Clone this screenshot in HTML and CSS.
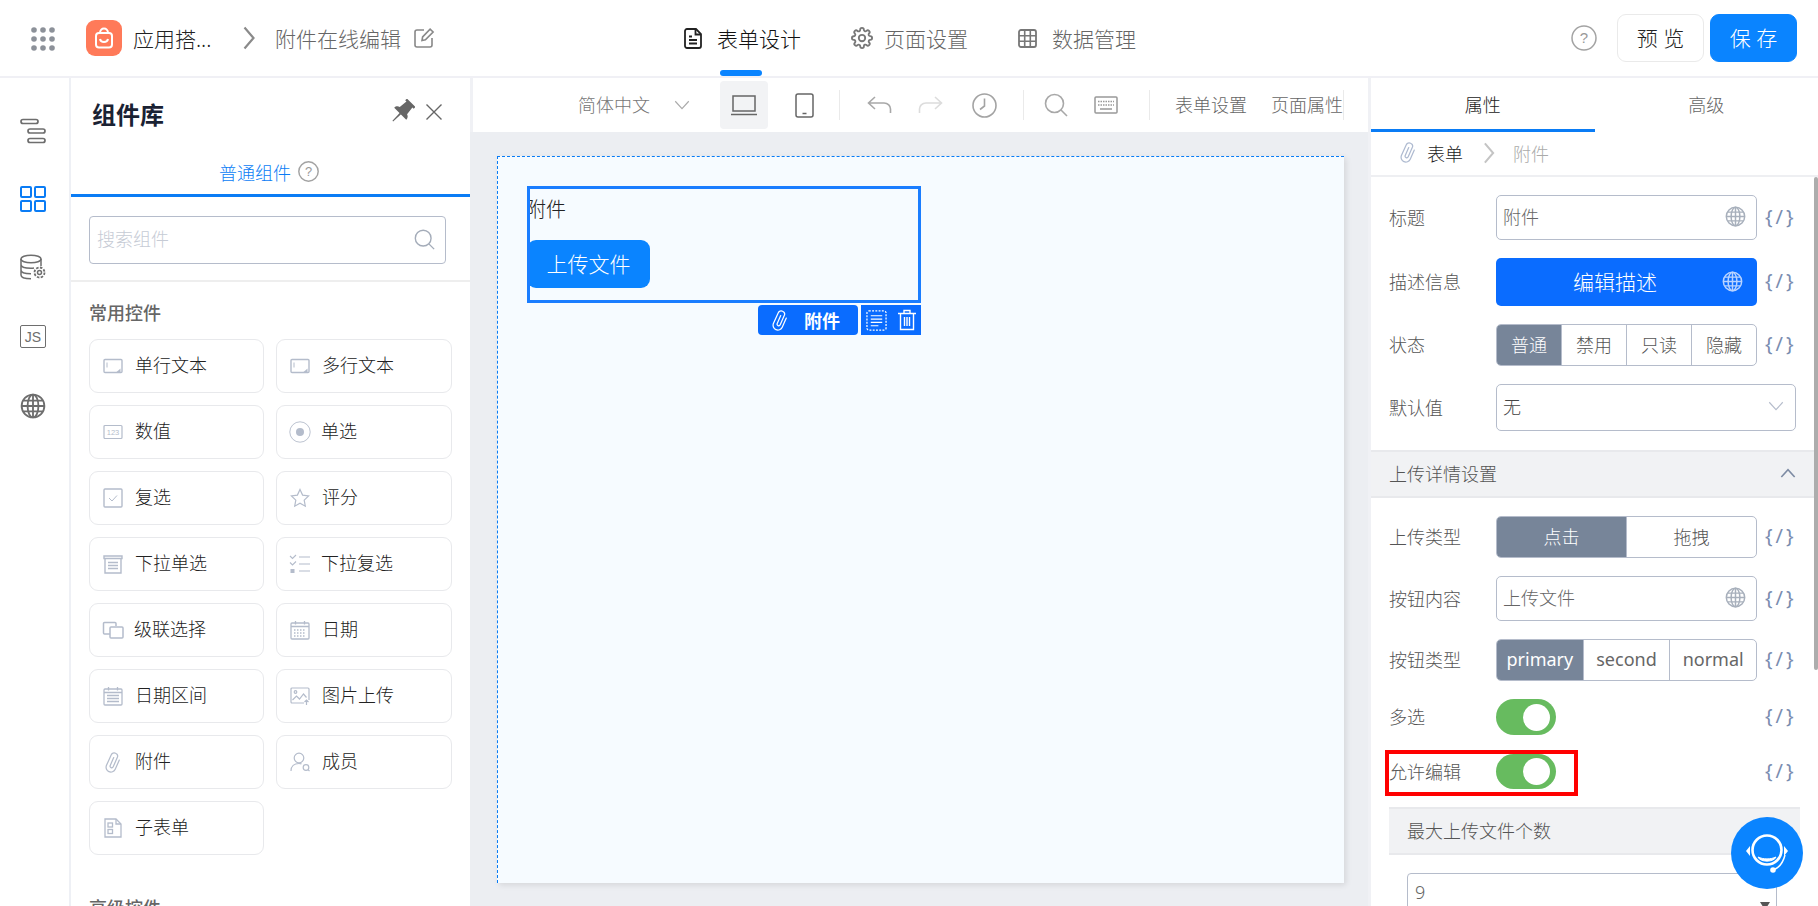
FILE: index.html
```html
<!DOCTYPE html>
<html lang="zh-CN">
<head>
<meta charset="utf-8">
<title>附件在线编辑</title>
<link rel="stylesheet" href="styles.css">
</head>
<body>
<svg class="defs" aria-hidden="true">
  <symbol id="clip" viewBox="3 1 18 22"><path transform="rotate(24 12 12)" d="M17 7V17.500a5 5 0 0 1-10 0V5.500a3.500 3.500 0 0 1 7 0V16a1.700 1.700 0 0 1-3.400 0V7" fill="none" stroke="currentColor" stroke-width="1.300" stroke-linecap="round" stroke-linejoin="round"/></symbol>
  <symbol id="globe" viewBox="0 0 24 24"><g fill="none" stroke="currentColor" stroke-width="1.700"><circle cx="12" cy="12" r="10.500"/><ellipse cx="12" cy="12" rx="5" ry="10.500"/><path d="M12 1.500v21M1.500 12h21M3 7h18M3 17h18"/></g></symbol>
  <symbol id="chev" viewBox="0 0 24 24"><path d="M3 7l9 10 9-10" fill="none" stroke="currentColor" stroke-width="1.500"/></symbol>
  <symbol id="right" viewBox="0 0 12 24"><path d="M1.500 1.500L10.500 12 1.500 22.500" fill="none" stroke="currentColor" stroke-width="2.200"/></symbol>
  <symbol id="search" viewBox="0 0 24 24"><circle cx="10.500" cy="10.500" r="9" fill="none" stroke="currentColor" stroke-width="1.600"/><path d="M17 17l6 6" stroke="currentColor" stroke-width="1.600"/></symbol>
  <symbol id="input" viewBox="0 0 20 16"><rect x="1" y="1.500" width="18" height="13" rx="1" fill="none" stroke="currentColor" stroke-width="1.400"/><path d="M4 4.500v5" stroke="currentColor"/><path d="M17.500 10.500l-4 3.500h4z" fill="currentColor"/></symbol>
  <symbol id="radio" viewBox="0 0 22 22"><circle cx="11" cy="11" r="10.200" fill="none" stroke="currentColor" stroke-width=".9"/><circle cx="11" cy="11" r="4" fill="currentColor"/></symbol>
  <symbol id="check" viewBox="0 0 20 20"><rect x="1" y="1" width="18" height="18" rx="1" fill="none" stroke="currentColor" stroke-width="1.400"/><path d="M6 10l3 3 5-5.500" fill="none" stroke="currentColor"/></symbol>
  <symbol id="star" viewBox="0 0 20 20"><path d="M10 1.500l2.600 5.600 6 .8-4.400 4.200 1.100 6.100L10 15.300l-5.300 2.900 1.100-6.100L1.400 7.900l6-.8z" fill="none" stroke="currentColor" stroke-width="1.200"/></symbol>
  <symbol id="sel" viewBox="0 0 20 20"><g fill="none" stroke="currentColor" stroke-width="1.400"><path d="M1 2h18v2.500H1z"/><path d="M2 5v14h16V5M5 8.500h10M5 11.500h10M5 14.500h10"/></g></symbol>
  <symbol id="multi" viewBox="0 0 22 20"><g fill="none" stroke="currentColor" stroke-width="1.100"><path d="M1 2l2.500 2.500L7 1M1 8.500l2.500 2.500L7 7.500M10 3h11M10 10h11M10 17h11"/></g><rect x="1.500" y="15" width="4" height="4" fill="currentColor"/></symbol>
  <symbol id="casc" viewBox="0 0 22 20"><g fill="none" stroke="currentColor" stroke-width="1.500"><path d="M8 14H2.500a1 1 0 0 1-1-1V3.500a1 1 0 0 1 1-1H13a1 1 0 0 1 1 1V6"/><rect x="8" y="7" width="13" height="11" rx="1"/></g></symbol>
  <symbol id="cal" viewBox="0 0 20 20"><g fill="none" stroke="currentColor" stroke-width="1.300"><rect x="1" y="3" width="18" height="16" rx="1"/><path d="M1 6.500h18M5.500 1v3.500M14.500 1v3.500"/><path d="M4 10h12M4 13h12M4 16h12" stroke-dasharray="1.500 1.500"/></g></symbol>
  <symbol id="cal2" viewBox="0 0 20 20"><g fill="none" stroke="currentColor" stroke-width="1.300"><rect x="1" y="3" width="18" height="16" rx="1"/><path d="M5.500 1v3.500M14.500 1v3.500M1 6.500h18M4 9.500h12M4 12.500h12M4 15.500h12"/></g></symbol>
  <symbol id="img" viewBox="0 0 20 18"><g fill="none" stroke="currentColor" stroke-width="1.200"><path d="M14 16H2a1 1 0 0 1-1-1V2a1 1 0 0 1 1-1h16a1 1 0 0 1 1 1v11"/><path d="M2.500 13l4-4 3 3 4-5 3 3.500"/><circle cx="5.500" cy="5" r="1.300"/><path d="M16.500 18v-5M14.500 15l2-2 2 2"/></g></symbol>
  <symbol id="user" viewBox="0 0 20 20"><g fill="none" stroke="currentColor" stroke-width="1.200"><circle cx="9" cy="6" r="4.800"/><path d="M1 19c0-4.500 3.200-7.500 8-7.500 1 0 1.800.1 2.500.4"/><circle cx="16" cy="15.500" r="2.800"/><path d="M18 17.700l1.500 1.500"/></g></symbol>
  <symbol id="sub" viewBox="0 0 18 20"><g fill="none" stroke="currentColor" stroke-width="1.300"><path d="M1 1h11l5 5v13H1z"/><path d="M12 1v5h5"/><rect x="4" y="5" width="4.500" height="4"/><rect x="4" y="11.500" width="4.500" height="4"/></g></symbol>
  <symbol id="dots" viewBox="0 0 24 24"><g fill="currentColor"><circle cx="3" cy="3" r="2.800"/><circle cx="12" cy="3" r="2.800"/><circle cx="21" cy="3" r="2.800"/><circle cx="3" cy="12" r="2.800"/><circle cx="12" cy="12" r="2.800"/><circle cx="21" cy="12" r="2.800"/><circle cx="3" cy="21" r="2.800"/><circle cx="12" cy="21" r="2.800"/><circle cx="21" cy="21" r="2.800"/></g></symbol>
  <symbol id="gear" viewBox="0 0 24 24"><g fill="none" stroke="currentColor" stroke-width="2"><circle cx="12" cy="12" r="3.500"/><path d="M19.400 15a1.650 1.650 0 0 0 .33 1.820l.06.06a2 2 0 0 1-2.830 2.830l-.06-.06a1.650 1.650 0 0 0-1.820-.33 1.650 1.650 0 0 0-1 1.510V21a2 2 0 0 1-4 0v-.09A1.650 1.650 0 0 0 9 19.400a1.650 1.650 0 0 0-1.820.33l-.06.06a2 2 0 0 1-2.830-2.830l.06-.06a1.650 1.650 0 0 0 .33-1.820 1.650 1.650 0 0 0-1.510-1H3a2 2 0 0 1 0-4h.09A1.650 1.650 0 0 0 4.600 9a1.650 1.650 0 0 0-.33-1.820l-.06-.06a2 2 0 0 1 2.830-2.830l.06.06a1.650 1.650 0 0 0 1.820.33H9a1.650 1.650 0 0 0 1-1.510V3a2 2 0 0 1 4 0v.09a1.650 1.650 0 0 0 1 1.510 1.650 1.650 0 0 0 1.820-.33l.06-.06a2 2 0 0 1 2.830 2.830l-.06.06a1.650 1.650 0 0 0-.33 1.820V9a1.650 1.650 0 0 0 1.510 1H21a2 2 0 0 1 0 4h-.09a1.650 1.650 0 0 0-1.510 1z"/></g></symbol>
</svg>

<div class="app">
  <header class="topbar">
    <div class="brand">
      <svg class="ic-dots" width="24" height="24"><use href="#dots"/></svg>
      <svg class="logo" width="36" height="36" viewBox="0 0 36 36"><rect width="36" height="36" rx="9" fill="#ff7a59"/><g fill="none" stroke="#fff" stroke-width="2"><rect x="10" y="13" width="16" height="14.500" rx="3"/><path d="M14 13c0-6 8-6 8 0M14 19c.8 4 7.200 4 8 0"/></g></svg>
      <span class="app-name">应用搭...</span>
      <svg class="crumb-sep" width="12" height="24"><use href="#right"/></svg>
      <span class="page-name">附件在线编辑</span>
      <svg class="ic-edit" width="22" height="22" viewBox="0 0 22 22"><path d="M11 3H4a2 2 0 0 0-2 2v13a2 2 0 0 0 2 2h13a2 2 0 0 0 2-2v-7" fill="none" stroke="currentColor" stroke-width="1.600"/><path d="M9 13.500l.6-3.500 7.500-7.800 3 2.800-7.700 7.800z" fill="none" stroke="currentColor" stroke-width="1.600"/></svg>
    </div>
    <nav class="modes">
      <a class="mode active"><svg width="18" height="21" viewBox="0 0 18 21"><path d="M3 1h9l5 5v12a2 2 0 0 1-2 2H3a2 2 0 0 1-2-2V3a2 2 0 0 1 2-2z" fill="none" stroke="currentColor" stroke-width="1.800"/><path d="M11.500 1v5.500H17M5 8.500h3M5 12h8M5 15.500h8" fill="none" stroke="currentColor" stroke-width="1.800"/></svg>表单设计</a>
      <a class="mode tight"><svg width="22" height="22"><use href="#gear"/></svg>页面设置</a>
      <a class="mode"><svg width="19" height="19" viewBox="0 0 19 19"><rect x="1" y="1" width="17" height="17" rx="2" fill="none" stroke="currentColor" stroke-width="1.800"/><path d="M1 6.700h17M1 12.300h17M6.700 1v17M12.300 1v17" stroke="currentColor" stroke-width="1.600"/></svg>数据管理</a>
    </nav>
    <div class="actions">
      <svg class="ic-help" width="26" height="26" viewBox="0 0 26 26"><circle cx="13" cy="13" r="12" fill="none" stroke="#a3a3a3" stroke-width="1.500"/><text x="13" y="18" text-anchor="middle" font-size="15" fill="#999" font-family="Liberation Sans, sans-serif">?</text></svg>
      <button class="btn btn-ghost">预 览</button>
      <button class="btn btn-primary">保 存</button>
    </div>
  </header>

  <div class="main">
    <aside class="rail">
      <svg class="rail-i" width="26" height="26" viewBox="0 0 26 26"><g fill="none" stroke="#6e6e6e" stroke-width="1.700"><rect x="1" y="1.500" width="17" height="4" rx="2"/><rect x="8" y="11" width="17" height="4" rx="2"/><rect x="8" y="20.500" width="17" height="4" rx="2"/></g></svg>
      <svg class="rail-i" width="26" height="26" viewBox="0 0 26 26"><g fill="none" stroke="#0a7cf5" stroke-width="2"><rect x="1" y="1" width="10" height="10" rx="1"/><rect x="15" y="1" width="10" height="10" rx="1"/><rect x="1" y="15" width="10" height="10" rx="1"/><rect x="15" y="15" width="10" height="10" rx="1"/></g></svg>
      <svg class="rail-i" width="26" height="26" viewBox="0 0 26 26"><g fill="none" stroke="#6e6e6e" stroke-width="1.500"><ellipse cx="11" cy="5" rx="10" ry="3.800"/><path d="M21 5v7M1 5v16c0 2.500 4.500 3.800 10 3.800M1 10.500c0 2.500 4.500 3.800 10 3.800 1 0 2-.05 3-.2M1 16c0 2.500 4.500 3.800 10 3.800"/><circle cx="19.500" cy="18.500" r="2"/><circle cx="19.500" cy="18.500" r="5" stroke-dasharray="2.500 1.400" stroke-width="1.800"/></g></svg>
      <div class="rail-js"><span>JS</span></div>
      <svg class="rail-i" width="26" height="26"><use href="#globe"/></svg>
    </aside>

    <section class="lib">
      <div class="lib-head">
        <h2>组件库</h2>
        <svg class="ic-pin" width="26" height="26" viewBox="0 0 26 26"><g fill="#666" transform="rotate(45 13 13)"><path d="M7 0h12v2.500h-1.800l1 8.500c2.300.8 3.300 2.400 3.300 4.500h-17c0-2.100 1-3.700 3.300-4.500l1-8.500H7z"/><path d="M12 15h2l-.5 11h-1z"/></g></svg>
        <svg class="ic-close" width="16" height="16" viewBox="0 0 16 16"><path d="M.5.500l15 15M15.500.500l-15 15" stroke="#666" stroke-width="1.400"/></svg>
      </div>
      <div class="lib-tab">普通组件<svg width="21" height="21" viewBox="0 0 26 26"><circle cx="13" cy="13" r="12" fill="none" stroke="#a3a3a3" stroke-width="1.800"/><text x="13" y="18.500" text-anchor="middle" font-size="16" fill="#999" font-family="Liberation Sans, sans-serif">?</text></svg></div>
      <div class="lib-search">
        <div class="search-box"><span>搜索组件</span><svg width="21" height="21"><use href="#search"/></svg></div>
      </div>
      <div class="lib-body">
        <h3>常用控件</h3>
        <div class="comp-grid">
          <div class="comp"><svg width="20" height="16"><use href="#input"/></svg>单行文本</div>
          <div class="comp"><svg width="20" height="16"><use href="#input"/></svg>多行文本</div>
          <div class="comp"><svg width="20" height="16" viewBox="0 0 20 16"><rect x="1" y="1.500" width="18" height="13" rx="1" fill="none" stroke="currentColor" stroke-width="1.200"/><text x="10" y="11" text-anchor="middle" font-size="7.500" fill="currentColor" font-family="Liberation Sans, sans-serif">123</text></svg>数值</div>
          <div class="comp"><svg width="22" height="22"><use href="#radio"/></svg>单选</div>
          <div class="comp"><svg width="20" height="20"><use href="#check"/></svg>复选</div>
          <div class="comp"><svg width="20" height="20"><use href="#star"/></svg>评分</div>
          <div class="comp"><svg width="20" height="20"><use href="#sel"/></svg>下拉单选</div>
          <div class="comp"><svg width="22" height="20"><use href="#multi"/></svg>下拉复选</div>
          <div class="comp"><svg width="22" height="20"><use href="#casc"/></svg>级联选择</div>
          <div class="comp"><svg width="20" height="20"><use href="#cal"/></svg>日期</div>
          <div class="comp"><svg width="20" height="20"><use href="#cal2"/></svg>日期区间</div>
          <div class="comp"><svg width="20" height="18"><use href="#img"/></svg>图片上传</div>
          <div class="comp"><svg width="20" height="21"><use href="#clip"/></svg>附件</div>
          <div class="comp"><svg width="20" height="20"><use href="#user"/></svg>成员</div>
          <div class="comp"><svg width="20" height="20"><use href="#sub"/></svg>子表单</div>
        </div>
        <h3 class="second">高级控件</h3>
      </div>
    </section>

    <section class="center">
      <div class="toolbar">
        <span class="t-lang">简体中文</span>
        <svg class="t-chev" width="18" height="18"><use href="#chev"/></svg>
        <div class="t-device"><svg width="26" height="22" viewBox="0 0 26 22"><rect x="2" y="2" width="22" height="15" fill="none" stroke="#666" stroke-width="1.500"/><path d="M0 20.500h26" stroke="#666" stroke-width="1.500"/></svg></div>
        <svg class="t-phone" width="19" height="25" viewBox="0 0 19 25"><rect x="1" y="1" width="17" height="23" rx="2" fill="none" stroke="#666" stroke-width="1.500"/><path d="M7.500 20.500h4" stroke="#666" stroke-width="1.500"/></svg>
        <i class="t-sep"></i>
        <svg class="t-undo" width="25" height="18" viewBox="0 0 25 18"><path d="M8 1L1.500 7 8 13M1.500 7H17c4 0 6.500 3 6.500 6v4" fill="none" stroke="#a8a8a8" stroke-width="1.600"/></svg>
        <svg class="t-redo" width="27" height="18" viewBox="0 0 25 18"><path d="M17 1l6.500 6L17 13M23.500 7H8C4 7 1.500 10 1.500 13v4" fill="none" stroke="#dcdcdc" stroke-width="1.600"/></svg>
        <svg class="t-clock" width="25" height="25" viewBox="0 0 25 25"><circle cx="12.500" cy="12.500" r="11.500" fill="none" stroke="#a3a3a3" stroke-width="1.600"/><path d="M12.500 5.500v7.500L8 16.500" fill="none" stroke="#a3a3a3" stroke-width="1.600"/></svg>
        <i class="t-sep s2"></i>
        <svg class="t-search" width="24" height="24"><use href="#search"/></svg>
        <svg class="t-keys" width="24" height="18" viewBox="0 0 24 18"><rect x="1" y="1" width="22" height="16" rx="1" fill="none" stroke="#999" stroke-width="1.500"/><path d="M4 5.500h16M4 9h16" stroke="#999" stroke-width="1.500" stroke-dasharray="1.500 1"/><path d="M6 13h12" stroke="#999" stroke-width="1.500"/></svg>
        <i class="t-sep s3"></i>
        <span class="t-link l1">表单设置</span>
        <span class="t-link l2">页面属性</span>
        <i class="t-sep s4"></i>
      </div>
      <div class="canvas">
        <div class="sheet">
          <div class="selected">
            <div class="field-label">附件</div>
            <button class="upload">上传文件</button>
            <div class="sel-tag"><svg width="18" height="21"><use href="#clip"/></svg><span>附件</span></div>
            <div class="sel-ops">
              <svg width="21" height="21" viewBox="0 0 22 22"><rect x="1" y="1" width="20" height="20" rx="2" fill="none" stroke="#fff" stroke-width="1.300" stroke-dasharray="2 1.400"/><path d="M5 6h12M5 9.500h12M5 13h12M5 16.500h8" stroke="#fff" stroke-width="1.200"/></svg>
              <svg width="18" height="22" viewBox="0 0 18 22"><g fill="none" stroke="#fff" stroke-width="1.400"><path d="M0 4.500h18M6 4V1.500h6V4M2.500 4.500V20.500h13V4.500M6.500 8v9M9 8v9M11.500 8v9"/></g></svg>
            </div>
          </div>
        </div>
      </div>
    </section>

    <aside class="props">
      <div class="props-tabs">
        <div class="p-tab active">属性</div>
        <div class="p-tab">高级</div>
      </div>
      <div class="path">
        <svg width="18" height="21"><use href="#clip"/></svg>
        <span class="path-a">表单</span>
        <svg class="path-sep" width="12" height="22"><use href="#right"/></svg>
        <span class="path-b">附件</span>
      </div>
      <div class="form">
        <div class="row h45">
          <label>标题</label>
          <div class="ctl text-in"><span>附件</span><svg width="21" height="21"><use href="#globe"/></svg></div>
          <span class="var">{/}</span>
        </div>
        <div class="row h48">
          <label>描述信息</label>
          <div class="ctl desc-btn"><span>编辑描述</span><svg width="21" height="21"><use href="#globe"/></svg></div>
          <span class="var">{/}</span>
        </div>
        <div class="row h42">
          <label>状态</label>
          <div class="ctl seg"><span class="on">普通</span><span>禁用</span><span>只读</span><span>隐藏</span></div>
          <span class="var">{/}</span>
        </div>
        <div class="row h47">
          <label>默认值</label>
          <div class="ctl wide text-in"><span class="dark">无</span><svg class="sel-chev" width="18" height="18"><use href="#chev"/></svg></div>
        </div>
        <div class="section">
          <span>上传详情设置</span>
          <svg width="16" height="16" viewBox="0 0 24 24"><path d="M2 18L12 7l10 11" fill="none" stroke="#7d8ba3" stroke-width="2.400"/></svg>
        </div>
        <div class="row h42">
          <label>上传类型</label>
          <div class="ctl seg"><span class="on">点击</span><span>拖拽</span></div>
          <span class="var">{/}</span>
        </div>
        <div class="row h45">
          <label>按钮内容</label>
          <div class="ctl text-in"><span>上传文件</span><svg width="21" height="21"><use href="#globe"/></svg></div>
          <span class="var">{/}</span>
        </div>
        <div class="row h42">
          <label>按钮类型</label>
          <div class="ctl seg latin"><span class="on">primary</span><span>second</span><span>normal</span></div>
          <span class="var">{/}</span>
        </div>
        <div class="row h36">
          <label>多选</label>
          <div class="ctl"><div class="switch"></div></div>
          <span class="var">{/}</span>
        </div>
        <div class="row h35 marked">
          <label>允许编辑</label>
          <div class="ctl"><div class="switch"></div></div>
          <span class="var">{/}</span>
          <div class="red-box"></div>
        </div>
        <div class="section inset"><span>最大上传文件个数</span></div>
        <div class="num-in"><span>9</span><i class="tri"></i></div>
        <div class="scrollbar"></div>
      </div>
    </aside>
  </div>

  <div class="bubble">
    <svg width="50" height="50" viewBox="0 0 50 50"><g fill="none" stroke="#fff"><circle cx="25" cy="22" r="14.500" stroke-width="2.600"/><path d="M43 27c-2 8-6 13-12 15" stroke-width="1.500"/></g><path d="M16 29c5 2.500 13 2.500 18 0-2 5.500-16 5.500-18 0z" fill="#fff" stroke="#fff" stroke-width="1"/><path d="M8 18l-4 5 4 5zM42 18l4 5-4 5z" fill="#fff"/><circle cx="31" cy="42" r="2.800" fill="#fff"/></svg>
  </div>
</div>
</body>
</html>
```

FILE: styles.css
```css
* { box-sizing: border-box; }
html, body { margin: 0; height: 100%; overflow: hidden; }
body {
  font-family: "Noto Sans", "Noto Sans CJK SC", sans-serif;
  font-size: 18px;
  font-weight: 300;
  color: #333;
  background: #fff;
}
.defs { position: absolute; width: 0; height: 0; }
svg { display: block; flex: none; }
button { font-family: inherit; font-weight: 300; }
.app { position: relative; height: 100vh; display: flex; flex-direction: column; }

/* top bar */
.topbar {
  flex: none; height: 78px; border-bottom: 2px solid #f0f0f5;
  display: flex; align-items: center; position: relative;
}
.brand { display: flex; align-items: center; padding-left: 31px; width: 684px; }
.ic-dots { color: #8c9199; margin-top: 1px; }
.logo { margin-left: 31px; }
.app-name { margin-left: 11px; font-size: 21px; width: 80px; white-space: nowrap; color: #222; }
.crumb-sep { margin-left: 30px; color: #8a8a8a; }
.page-name { margin-left: 20px; font-size: 21px; color: #666; white-space: nowrap; }
.ic-edit { margin-left: 12px; color: #888; }
.modes { display: flex; align-items: center; gap: 50px; }
.mode { display: flex; align-items: center; gap: 15px; font-size: 21px; color: #666; position: relative; height: 76px; }
.mode svg { color: #777; }
.mode.tight { gap: 11px; }
.mode.active { color: #111; }
.mode.active svg { color: #222; }
.mode.active::after {
  content: ""; position: absolute; left: 36px; bottom: 0; width: 42px; height: 6px;
  background: #0a84ff; border-radius: 3px;
}
.actions { margin-left: auto; display: flex; align-items: center; padding-right: 21px; }
.ic-help { margin-right: 20px; }
.btn { width: 87px; height: 48px; border-radius: 9px; font-size: 21px; border: 1px solid #eaeaea; background: #fff; color: #222; padding: 0 0 2px; }
.btn-primary { margin-left: 6px; background: #0a84ff; border-color: #0a84ff; color: #fff; }

/* layout */
.main { flex: 1; min-height: 0; display: flex; background: #f0f1f5; }
.rail { width: 71px; flex: none; background: #fff; border-right: 2px solid #eef0f5; padding: 40px 0 0 20px; display: flex; flex-direction: column; gap: 42px; }
.rail-i { color: #6e6e6e; }
.rail-js { width: 26px; height: 23px; border: 1.500px solid #6e6e6e; border-radius: 2px; font-family: "Liberation Sans", sans-serif; font-size: 14px; font-weight: 400; color: #6e6e6e; display: flex; align-items: center; justify-content: center; margin: 3px 0; }

/* library */
.lib { width: 399px; flex: none; background: #fff; display: flex; flex-direction: column; overflow: hidden; }
.lib-head { height: 73px; flex: none; display: flex; align-items: center; padding: 0 28px 6px 21px; }
.lib-head h2 { margin: 4px 0 0; font-size: 24px; font-weight: 700; color: #1a2233; }
.ic-pin { margin-left: auto; }
.ic-close { margin-left: 11px; }
.lib-tab { flex: none; height: 46px; border-bottom: 3px solid #0a7cf5; display: flex; align-items: center; justify-content: center; gap: 7px; color: #0a7cf5; font-size: 18px; padding: 0 3px 2px 0; }
.lib-search { flex: none; padding: 19px 24px 16px 18px; border-bottom: 2px solid #eee; height: 85px; }
.search-box { height: 48px; border: 1px solid #b5bccb; border-radius: 4px; padding: 0 10px 4px 7px; display: flex; align-items: center; justify-content: space-between; color: #c6cbd5; }
.search-box svg { color: #a4acb9; margin-top: 3px; }
.lib-body { flex: 1; padding: 18px 19px 0 18px; }
.lib-body h3 { margin: 0 0 13px; font-size: 18px; line-height: 26px; font-weight: 500; color: #666; }
.lib-body h3.second { margin-top: 40px; }
.comp-grid { display: grid; grid-template-columns: 175px 176px; gap: 12px; }
.comp { height: 54px; border: 1px solid #e8e9ec; border-radius: 9px; display: flex; align-items: center; padding: 0 0 4px 13px; color: #222; font-size: 18px; position: relative; }
.comp svg { color: #b4bccb; margin: 4px 12px 0 0; }
.comp svg[width="22"] { margin-right: 10px; margin-left: -1px; }

/* center */
.center { width: 898px; flex: none; display: flex; flex-direction: column; min-height: 0; }
.toolbar { flex: none; height: 54px; margin-left: 3px; background: #fff; display: flex; align-items: center; color: #777; }
.t-lang { margin-left: 105px; color: #777; padding-bottom: 2px; }
.t-chev { margin-left: 23px; color: #aaa; }
.t-device { margin-left: 29px; width: 48px; height: 48px; background: #f2f3f5; border-radius: 4px; display: flex; align-items: center; justify-content: center; }
.t-phone { margin-left: 27px; }
.t-sep { width: 1px; height: 30px; background: #eaeaea; margin-left: 25px; }
.t-undo { margin-left: 27px; }
.t-redo { margin-left: 25px; }
.t-clock { margin-left: 28px; }
.s2 { margin-left: 26px; }
.t-search { margin-left: 20px; color: #a8a8a8; }
.t-keys { margin-left: 26px; }
.s3 { margin-left: 31px; }
.t-link { font-size: 18px; white-space: nowrap; color: #666; padding-bottom: 2px; }
.l1 { margin-left: 25px; }
.l2 { margin-left: 24px; }
.s4 { margin-left: 0; }
.canvas { flex: 1; min-height: 0; background: #eceef2; padding: 24px 24px 23px 27px; }
.sheet { height: 100%; background: #f6fbff; border-top: 1px dashed #0a7cf5; border-left: 1px dashed #0a7cf5; box-shadow: 2px 2px 6px rgba(0,0,0,.1); padding: 29px 0 0 29px; }
.selected { position: relative; width: 394px; height: 117px; padding-top: 10px; }
.selected::after { content: ""; position: absolute; inset: 0; border: 3px solid #1a7dff; pointer-events: none; }
.field-label { font-size: 20px; line-height: 28px; color: #222; margin: 0 0 16px -1px; }
.upload { display: block; width: 123px; height: 48px; background: #0a84ff; color: #fff; border: 0; border-radius: 9px; font-size: 21px; padding: 0 0 2px; }
.sel-tag { position: absolute; left: 231px; top: 119px; width: 100px; height: 30px; background: #0a6cff; border-radius: 4px; color: #fff; display: flex; align-items: center; padding-left: 13px; gap: 15px; font-weight: 700; font-size: 18px; }
.sel-ops { position: absolute; left: 334px; top: 119px; width: 60px; height: 30px; background: #0a6cff; display: flex; align-items: center; justify-content: space-between; padding: 0 5px 0 5px; }

/* props */
.props { width: 447px; flex: none; margin-left: 3px; background: #fff; display: flex; flex-direction: column; min-height: 0; }
.props-tabs { flex: none; height: 54px; display: flex; }
.p-tab { width: 225px; display: flex; align-items: center; justify-content: center; color: #666; padding-bottom: 2px; }
.p-tab.active { color: #222; border-bottom: 3px solid #0a7cf5; padding-bottom: 0; }
.path { flex: none; height: 45px; border-bottom: 2px solid #eeeff2; display: flex; align-items: center; padding: 0 0 2px 28px; color: #aebad0; }
.path-a { margin-left: 10px; color: #222; }
.path-sep { margin-left: 20px; color: #c4c4c4; }
.path-b { margin-left: 18px; color: #aaa; }
.form { flex: 1; min-height: 0; overflow: hidden; position: relative; padding-top: 18px; }
.scrollbar { position: absolute; right: 0; top: 0; width: 4px; height: 493px; background: #adadad; border-radius: 2px; }
.row { display: flex; align-items: center; padding-left: 18px; margin-bottom: 18px; position: relative; }
.row label { width: 107px; flex: none; color: #555; padding-bottom: 2px; }
.h35 { height: 35px; } .h36 { height: 36px; margin-bottom: 19px; } .h42 { height: 42px; } .h45 { height: 45px; } .h47 { height: 47px; margin-bottom: 19px; } .h48 { height: 48px; }
.ctl { width: 261px; flex: none; height: 100%; }
.wide { width: 300px; }
.var { margin-left: 8px; color: #7a8db0; font-size: 20px; font-weight: 400; letter-spacing: 3px; white-space: nowrap; padding-bottom: 3px; }
.text-in { border: 1px solid #b5bccb; border-radius: 5px; display: flex; align-items: center; justify-content: space-between; padding: 0 10px 3px 6px; color: #666; }
.text-in svg { color: #a8b0bc; }
.text-in .dark { color: #444; }
.text-in .sel-chev { color: #b5bccb; }
.desc-btn { background: #0a6cff; border-radius: 5px; color: #fff; font-size: 21px; display: flex; align-items: center; justify-content: space-between; padding: 0 14px 2px 77px; }
.desc-btn svg { color: #b9d3ff; }
.seg { display: flex; border: 1px solid #b5bccb; border-radius: 5px; overflow: hidden; }
.seg span { flex: 1; display: flex; align-items: center; justify-content: center; color: #555; border-left: 1px solid #b5bccb; padding-bottom: 2px; }
.seg span:first-child { border-left: 0; }
.seg .on { background: #778599; color: #fff; }
.seg.latin { font-weight: 400; }
.seg.latin span { color: #666; }
.seg.latin .on { color: #fff; }
.switch { width: 60px; height: 100%; border-radius: 18px; background: #67bb5f; position: relative; }
.switch::after { content: ""; position: absolute; right: 6px; top: 50%; width: 27px; height: 27px; margin-top: -13.500px; border-radius: 50%; background: #fff; }
.red-box { position: absolute; left: 14px; top: -4px; width: 193px; height: 46px; border: 4px solid #f00; pointer-events: none; }
.section { height: 48px; margin: 0 4px 18px 0; background: #f1f2f4; border-top: 2px solid #e8e9ec; border-bottom: 2px solid #e8e9ec; display: flex; align-items: center; justify-content: space-between; padding: 0 18px 2px; color: #555; }
.section.inset { margin: 0 18px 18px; padding-left: 18px; }
.num-in { height: 44px; width: 370px; margin-left: 36px; border: 1px solid #b5bccb; border-radius: 4px 4px 0 0; padding: 6px 0 0 7px; color: #666; position: relative; }
.tri { position: absolute; right: 6px; bottom: 6px; border: 5px solid transparent; border-top: 8px solid #555; border-bottom: 0; }

/* help bubble */
.bubble { position: absolute; right: 15px; bottom: 17px; width: 72px; height: 72px; border-radius: 50%; background: #0a84ff; display: flex; align-items: center; justify-content: center; }
```
